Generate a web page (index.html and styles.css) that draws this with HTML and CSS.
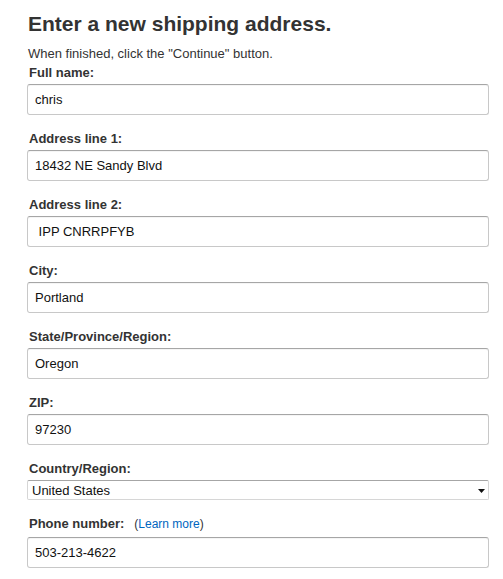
FILE: index.html
```html
<!DOCTYPE html>
<html>
<head>
<meta charset="utf-8">
<link rel="stylesheet" href="styles.css">
</head>
<body>
<div class="page">
  <h1 class="title">Enter a new shipping address.</h1>
  <p class="intro">When finished, click the "Continue" button.</p>
  <form class="form">
    <div class="field">
      <label class="label">Full name:</label>
      <input class="input" type="text" value="chris">
    </div>
    <div class="field">
      <label class="label">Address line 1:</label>
      <input class="input" type="text" value="18432 NE Sandy Blvd">
    </div>
    <div class="field">
      <label class="label">Address line 2:</label>
      <input class="input" type="text" value=" IPP CNRRPFYB">
    </div>
    <div class="field">
      <label class="label">City:</label>
      <input class="input" type="text" value="Portland">
    </div>
    <div class="field">
      <label class="label">State/Province/Region:</label>
      <input class="input" type="text" value="Oregon">
    </div>
    <div class="field">
      <label class="label">ZIP:</label>
      <input class="input" type="text" value="97230">
    </div>
    <div class="field">
      <label class="label">Country/Region:</label>
      <div class="select-wrap">
        <select class="select">
          <option>United States</option>
        </select>
        <svg class="arrow" width="7" height="4" viewBox="0 0 7 4"><path d="M0 0H7L3.5 4Z" fill="#111"/></svg>
      </div>
    </div>
    <div class="field">
      <label class="label phone-label">Phone number:<span class="learn">(<a href="#" class="link">Learn more</a>)</span></label>
      <input class="input" type="text" value="503-213-4622">
    </div>
  </form>
</div>
</body>
</html>
```

FILE: styles.css
```css
html, body {
  margin: 0;
  padding: 0;
  background: #fff;
}
body {
  font-family: Arial, "Liberation Sans", sans-serif;
  color: #111;
}
.page {
  padding: 0 14px 0 27px;
  width: 462px;
}
.title {
  margin: 0;
  padding-top: 11px;
  padding-left: 1px;
  font-size: 21px;
  line-height: 26px;
  font-weight: bold;
  color: #333;
}
.intro {
  margin: 0;
  padding-top: 9px;
  padding-left: 1px;
  font-size: 13px;
  line-height: 15px;
  color: #333;
}
.form {
  margin: 0;
  padding-top: 4px;
}
.field {
  margin-bottom: 16px;
}
.label {
  display: block;
  padding-left: 2px;
  font-size: 13px;
  line-height: 16px;
  font-weight: bold;
  color: #333;
  margin-bottom: 3px;
}
.phone-label {
  margin-bottom: 5px;
}
.learn {
  font-weight: normal;
  font-size: 12px;
  margin-left: 10px;
  color: #333;
}
.link {
  color: #0066c0;
  text-decoration: none;
}
.input {
  display: block;
  box-sizing: border-box;
  width: 462px;
  height: 31px;
  margin: 0;
  padding: 0 7px;
  font-family: Arial, "Liberation Sans", sans-serif;
  font-size: 13px;
  color: #111;
  background: #fff;
  border: 1px solid #c8c8c8;
  border-top-color: #a6a6a6;
  border-radius: 3px;
  box-shadow: 0 1px 0 rgba(255,255,255,.5), inset 0 1px 0 rgba(0,0,0,.04);
  outline: none;
}
.select-wrap {
  position: relative;
  width: 462px;
}
.select {
  display: block;
  box-sizing: border-box;
  width: 462px;
  height: 20px;
  margin: 0;
  padding: 0 0 0 4px;
  -webkit-appearance: none;
  appearance: none;
  font-family: Arial, "Liberation Sans", sans-serif;
  font-size: 13px;
  color: #111;
  background: #fff;
  border: 1px solid #d6d6d6;
  border-top-color: #a6a6a6;
  border-radius: 2px;
  outline: none;
}
.arrow {
  position: absolute;
  right: 4px;
  top: 9px;
}
```
